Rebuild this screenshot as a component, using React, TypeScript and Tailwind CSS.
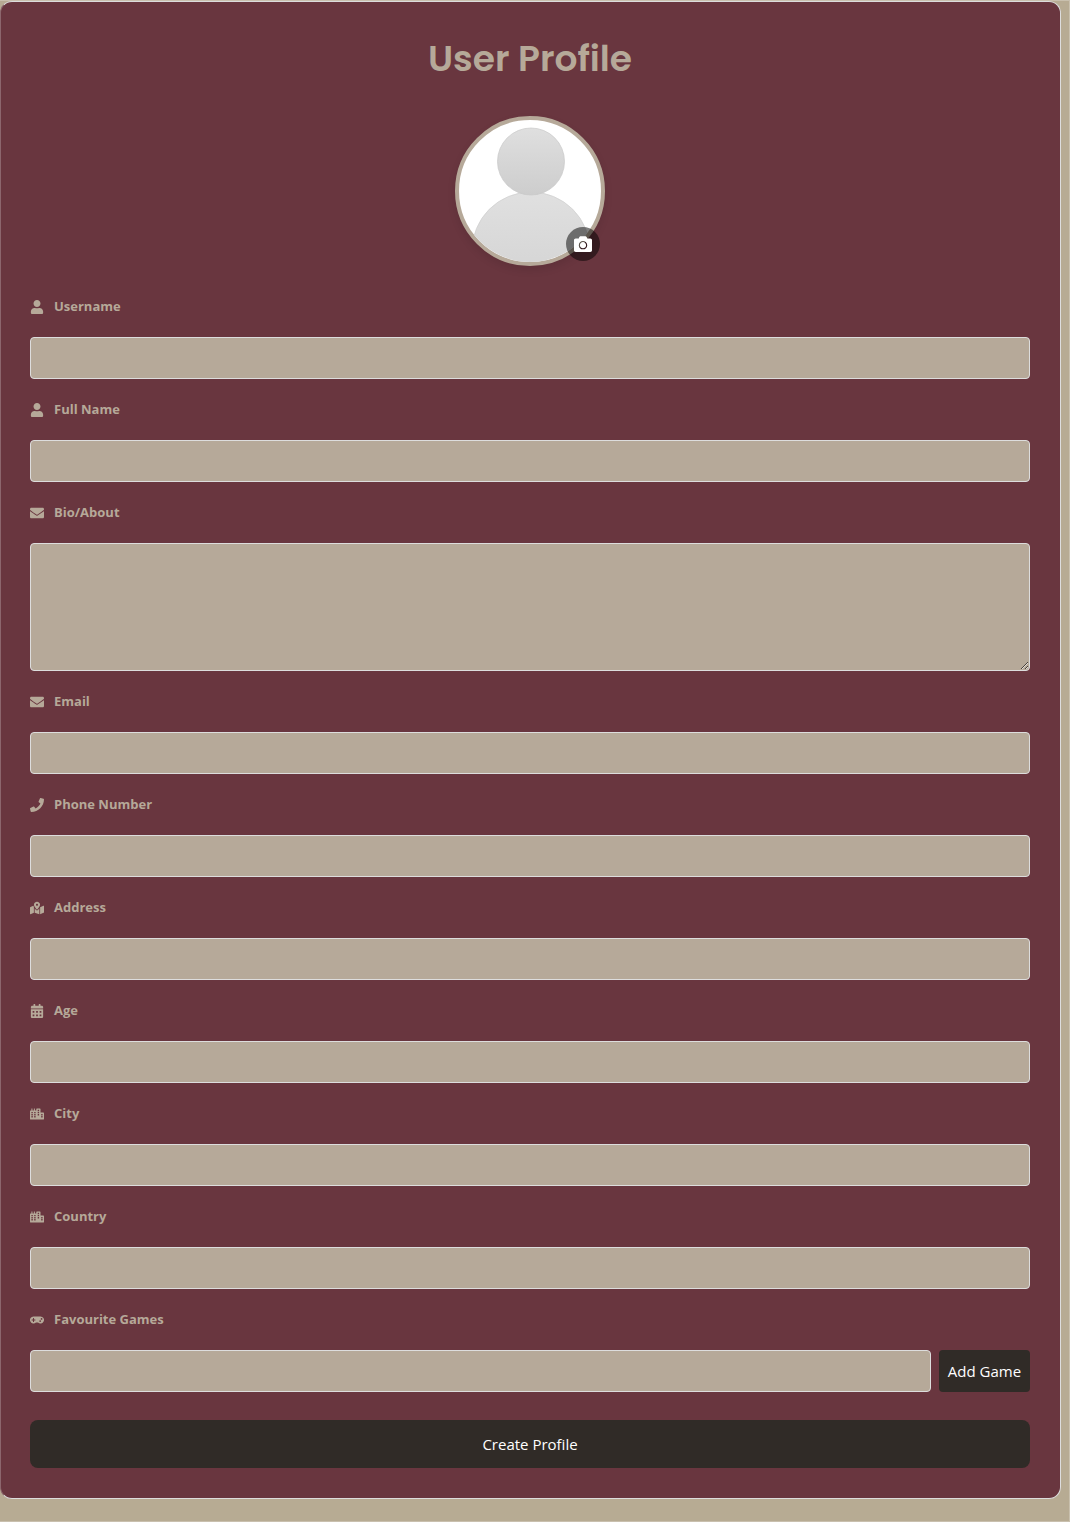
import React, { useId } from "react";
import {
  FaCalendarAlt,
  FaCamera,
  FaCity,
  FaEnvelope,
  FaGamepad,
  FaMapMarkedAlt,
  FaPhone,
  FaUser,
} from "react-icons/fa";
import type { IconType } from "react-icons";

type FieldProps = {
  label: string;
  icon: IconType;
  type?: string;
  multiline?: boolean;
  action?: React.ReactNode;
};

const control =
  "block w-full min-w-0 rounded border border-[#ddd] bg-[#b6a999] px-2 text-base text-[#302b27] outline-none focus:border-white";

function Field({ label, icon: Icon, type = "text", multiline, action }: FieldProps) {
  const id = useId();
  return (
    <div className="mb-5">
      <label
        htmlFor={id}
        className="mb-5 flex h-[21px] items-center gap-[10px] text-[13px] font-bold text-[#b6a999]"
      >
        <Icon size={14} aria-hidden />
        {label}
      </label>
      <div className="flex gap-2">
        {multiline ? (
          <textarea id={id} className={`${control} h-32 resize-y py-2`} />
        ) : (
          <input id={id} type={type} className={`${control} h-[42px]`} />
        )}
        {action}
      </div>
    </div>
  );
}

function Avatar() {
  return (
    <div className="relative mx-auto size-[150px]">
      <div className="size-full overflow-hidden rounded-full border-4 border-[#b6a999] bg-white shadow-[0_4px_8px_rgba(0,0,0,0.1)]">
        <svg viewBox="0 0 142 142" className="size-full" role="img" aria-label="Profile picture">
          <defs>
            <linearGradient id="head" x1="0" y1="0" x2="0" y2="1">
              <stop offset="0" stopColor="#dfdfdf" />
              <stop offset="1" stopColor="#cdcdcd" />
            </linearGradient>
            <linearGradient id="body" x1="0" y1="0" x2="0" y2="1">
              <stop offset="0" stopColor="#e0e0e0" />
              <stop offset="1" stopColor="#d0d0d0" />
            </linearGradient>
          </defs>
          <circle cx="72" cy="131" r="59" fill="url(#body)" stroke="#cfcfcf" strokeWidth="0.7" />
          <circle cx="72" cy="41.5" r="33.5" fill="url(#head)" stroke="#c8c8c8" strokeWidth="0.7" />
        </svg>
      </div>
      <button
        type="button"
        aria-label="Change profile picture"
        className="absolute right-[5px] bottom-[5px] flex size-[34px] items-center justify-center rounded-full bg-black/50 text-white"
      >
        <FaCamera size={18} aria-hidden />
      </button>
    </div>
  );
}

export default function App() {
  return (
    <div className="min-h-screen border-t border-r border-b border-[#c9c0ae] bg-[#b7ab93] pr-2 pb-[22px] font-['Open_Sans','Noto_Sans',sans-serif]">
      <form
        className="rounded-xl border border-[#ddd] border-l-[#8c666d] bg-[#69363f] pt-[30px] pr-[30px] pb-[30px] pl-[29px]"
        onSubmit={(event) => event.preventDefault()}
      >
        <h1 className="mb-[30px] text-center font-['Poppins','Inter',sans-serif] text-4xl leading-[54px] font-semibold text-[#b6a999]">
          User Profile
        </h1>
        <Avatar />
        <div className="pt-[30px]">
          <Field label="Username" icon={FaUser} />
          <Field label="Full Name" icon={FaUser} />
          <Field label="Bio/About" icon={FaEnvelope} multiline />
          <Field label="Email" icon={FaEnvelope} type="email" />
          <Field label="Phone Number" icon={FaPhone} type="tel" />
          <Field label="Address" icon={FaMapMarkedAlt} />
          <Field label="Age" icon={FaCalendarAlt} />
          <Field label="City" icon={FaCity} />
          <Field label="Country" icon={FaCity} />
          <Field
            label="Favourite Games"
            icon={FaGamepad}
            action={
              <button
                type="button"
                className="h-[42px] min-w-[91px] shrink-0 rounded bg-[#302b27] px-2 text-[15px] text-white"
              >
                Add Game
              </button>
            }
          />
        </div>
        <button
          type="submit"
          className="mt-7 block h-12 w-full rounded-lg bg-[#302b27] text-[15px] text-white"
        >
          Create Profile
        </button>
      </form>
    </div>
  );
}
